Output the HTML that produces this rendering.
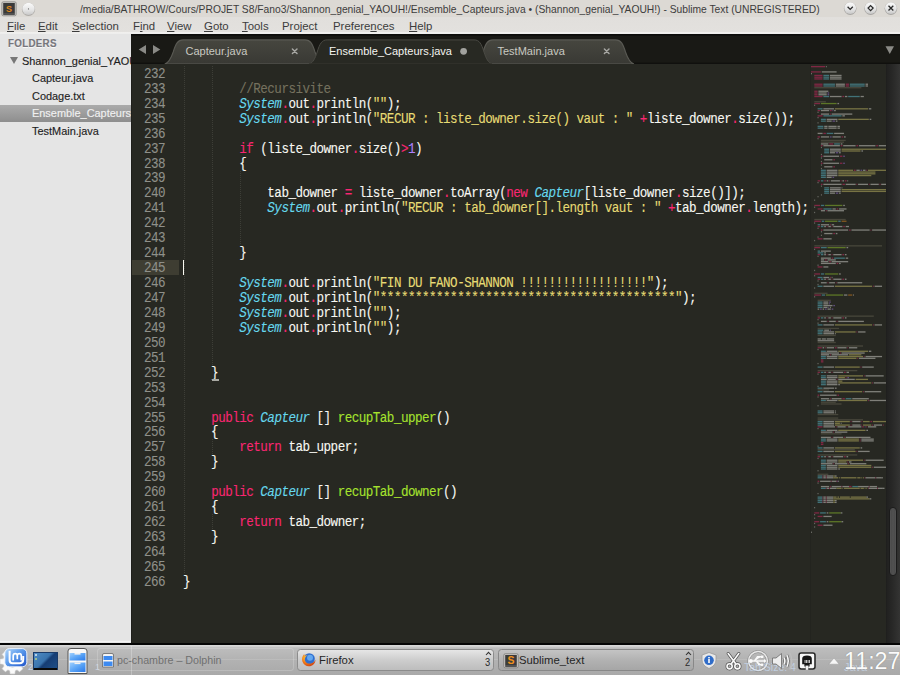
<!DOCTYPE html>
<html><head><meta charset="utf-8">
<style>
*{margin:0;padding:0;box-sizing:border-box}
html,body{width:900px;height:675px;overflow:hidden;background:#272822;position:relative;font-family:"Liberation Sans",sans-serif}
.abs{position:absolute}
#title{left:0;top:0;width:900px;height:17px;background:#dcd9d4}
#title .tt{position:absolute;left:80px;top:2.8px;font-size:11.3px;color:#3c3c3c;white-space:nowrap;transform:scaleX(0.91);transform-origin:0 0}
#menu{left:0;top:17px;width:900px;height:17px;background:linear-gradient(#e1dfdc 0,#e3e1de 15.3px,#f7f7f5 15.6px,#f7f7f5 16.4px,#e5e5e5 16.6px)}
#menu span{position:absolute;top:3px;font-size:11.4px;color:#3c3c3c;white-space:nowrap}
#menu u{text-decoration:underline;text-underline-offset:1px}
#side{left:0;top:34px;width:131px;height:609px;background:#e5e5e5;overflow:hidden}
#side .it{position:absolute;font-size:11.5px;color:#1e1e1e;white-space:nowrap;-webkit-text-stroke-width:0.15px;transform:scaleX(0.95);transform-origin:0 0}
#tabbar{left:131px;top:34px;width:769px;height:30px;background:#191915}
#editor{left:131px;top:64px;width:769px;height:577px;background:#272822}
.ln{position:absolute;left:183px;height:15px;line-height:15px;font-family:"Liberation Mono",monospace;font-size:12.6px;letter-spacing:-0.53px;color:#f8f8f2;white-space:pre;-webkit-text-stroke-width:0.1px;transform:scaleY(1.1);transform-origin:0 60%}
.gn{position:absolute;left:131px;width:34px;text-align:right;height:15px;line-height:15px;font-family:"Liberation Mono",monospace;font-size:12.6px;letter-spacing:-0.53px;color:#8f908a;-webkit-text-stroke-width:0.1px;transform:scaleY(1.1);transform-origin:0 60%}
.k{color:#f92672}.s{color:#e6db74}.t{color:#66d9ef;font-style:italic}.f{color:#a6e22e}.n{color:#ae81ff}.c{color:#75715e}
.tabt{position:absolute;top:44.5px;font-size:11px;white-space:nowrap}
.guide{position:absolute;width:1px;background:repeating-linear-gradient(to bottom,#3d3e37 0 1px,transparent 1px 2px)}
#panel{left:0;top:645px;width:900px;height:30px;background:linear-gradient(#c9c9c9,#a9a9a9)}
</style></head><body>
<div id="title" class="abs">
  <svg class="abs" style="left:1px;top:1px" width="16" height="16" viewBox="0 0 16 16">
   <rect x="0.8" y="0.8" width="14.4" height="14" rx="1.5" fill="#c7c5c2" stroke="#8c8a87" stroke-width="0.8"/>
   <rect x="2.2" y="2" width="11.6" height="10.5" fill="#3b3b3b"/>
   <rect x="2.2" y="12.5" width="11.6" height="1.2" fill="#202020"/>
   <text x="8" y="10.6" text-anchor="middle" font-family="Liberation Sans" font-weight="bold" font-size="9" fill="#e08a1c">S</text>
  </svg>
  <svg class="abs" style="left:21px;top:1px" width="16" height="16" viewBox="0 0 16 16">
   <circle cx="7.5" cy="8.4" r="6.6" fill="#aeaba8"/><circle cx="7.5" cy="7.9" r="6.2" fill="url(#wb)"/>
   <circle cx="7.5" cy="7.9" r="0.6" fill="#666"/>
  </svg>
  <div class="tt">/media/BATHROW/Cours/PROJET S8/Fano3/Shannon_genial_YAOUH!/Ensemble_Capteurs.java • (Shannon_genial_YAOUH!) - Sublime Text (UNREGISTERED)</div>
  <svg class="abs" style="left:838px;top:0" width="62" height="17" viewBox="0 0 62 17">
   <defs><linearGradient id="wb" x1="0" y1="0" x2="0" y2="1"><stop offset="0" stop-color="#fbfbfb"/><stop offset="0.6" stop-color="#e4e4e4"/><stop offset="1" stop-color="#c8c8c8"/></linearGradient></defs>
   <g><circle cx="12.2" cy="8.6" r="6.3" fill="#a9a7a4"/><circle cx="12.2" cy="8.1" r="5.9" fill="url(#wb)"/>
   <circle cx="32.6" cy="8.6" r="6.3" fill="#a9a7a4"/><circle cx="32.6" cy="8.1" r="5.9" fill="url(#wb)"/>
   <circle cx="52.9" cy="8.6" r="6.3" fill="#a9a7a4"/><circle cx="52.9" cy="8.1" r="5.9" fill="url(#wb)"/></g>
   <g fill="none" stroke="#2a2a2a" stroke-width="1.3">
   <path d="M9.6,6.8 L12.2,9.4 L14.8,6.8"/>
   <path d="M32.6,5.6 L35.1,8.1 L32.6,10.6 L30.1,8.1 Z"/>
   <path d="M50.5,5.7 L55.3,10.5 M55.3,5.7 L50.5,10.5"/>
   </g>
  </svg>
</div>
<div id="menu" class="abs">
  <span style="left:7px"><u>F</u>ile</span>
  <span style="left:38px"><u>E</u>dit</span>
  <span style="left:72px"><u>S</u>election</span>
  <span style="left:133px">F<u>i</u>nd</span>
  <span style="left:167px"><u>V</u>iew</span>
  <span style="left:204px"><u>G</u>oto</span>
  <span style="left:242px"><u>T</u>ools</span>
  <span style="left:282px">Project</span>
  <span style="left:333px">Prefere<u>n</u>ces</span>
  <span style="left:409px"><u>H</u>elp</span>
</div>
<div id="side" class="abs">
  <div class="it" style="left:7.5px;top:4px;font-weight:bold;color:#77767c;font-size:10.3px;letter-spacing:0.3px;text-shadow:0 1px 0 #f8f8f8">FOLDERS</div>
  <div class="abs" style="left:10px;top:23px;width:0;height:0;border-left:4px solid transparent;border-right:4px solid transparent;border-top:7px solid #777"></div>
  <div class="it" style="left:22px;top:20.5px">Shannon_genial_YAOUH!</div>
  <div class="it" style="left:32px;top:38px">Capteur.java</div>
  <div class="it" style="left:32px;top:55.5px">Codage.txt</div>
  <div class="abs" style="left:0;top:71px;width:131px;height:17px;background:linear-gradient(#ababab,#8e8e8e)"></div>
  <div class="it" style="left:32px;top:73px;color:#f0f0f0">Ensemble_Capteurs.java</div>
  <div class="it" style="left:32px;top:90.5px">TestMain.java</div>
</div>
<div id="tabbar" class="abs"></div>
<svg class="abs" style="left:131px;top:34px" width="769" height="31" viewBox="0 0 769 31">
<defs><linearGradient id="gi" x1="0" y1="0" x2="0" y2="1"><stop offset="0" stop-color="#46463f"/><stop offset="1" stop-color="#393934"/></linearGradient></defs>
<rect x="0" y="0" width="769" height="1.6" fill="#0c0c0a"/>
<rect x="0" y="28.6" width="769" height="1.2" fill="#0f0f0d"/>
<path d="M33.7,30 C38.2,29 40.2,24 42.2,18 C44.7,9.9 46.7,5.9 52.2,5.9 L174.0,5.9 C179.5,5.9 181.5,9.9 184.0,18 C186.0,24 188.0,29 192.5,30 Z" fill="url(#gi)" stroke="#5a5a54" stroke-width="1.1"/>
<path d="M343.5,30 C348.0,29 350.0,24 352.0,18 C354.5,9.9 356.5,5.9 362.0,5.9 L484.5,5.9 C490,5.9 492,9.9 494.5,18 C496.5,24 498.5,29 503,30 Z" fill="url(#gi)" stroke="#5a5a54" stroke-width="1.1"/>
<rect x="0" y="30" width="769" height="1" fill="#2b2c26"/>
<path d="M177.7,30 C182.2,29 184.2,24 186.2,18 C188.7,9.9 190.7,5.9 196.2,5.9 L343.0,5.9 C348.5,5.9 350.5,9.9 353.0,18 C355.0,24 357.0,29 361.5,30 Z" fill="#282923" stroke="#4a4a44" stroke-width="1"/>
<rect x="178" y="29.5" width="183" height="2" fill="#282923"/>
<path d="M7.7,15.5 L15,11 L15,20 Z" fill="#8a8a86"/>
<path d="M22,11 L29.3,15.5 L22,20 Z" fill="#8a8a86"/>
<path d="M754.5,12.2 L763,12.2 L758.75,20 Z" fill="#8a8a86"/>
<g stroke="#a8a8a4" stroke-width="1.45" stroke-linecap="round">
<path d="M161.4,15.0 L166.0,19.6 M166.0,15.0 L161.4,19.6"/>
<path d="M473.4,15.0 L478.0,19.6 M478.0,15.0 L473.4,19.6"/>
</g>
<circle cx="332.6" cy="17.3" r="3.4" fill="#a2a29e"/>
</svg>
<div class="tabt" style="left:185.5px;color:#c9c9c1">Capteur.java</div>
<div class="tabt" style="left:329px;color:#f4f4f0">Ensemble_Capteurs.java</div>
<div class="tabt" style="left:497.5px;color:#c9c9c1">TestMain.java</div>

<div id="editor" class="abs"></div>
<div class="abs" style="left:131px;top:64px;width:1px;height:579px;background:#1f1f1b"></div>
<div class="abs" style="left:132px;top:260px;width:47px;height:15px;background:#3e3d32"></div>
<div class="guide" style="left:184.0px;top:65.9px;height:508.0px"></div>
<div class="guide" style="left:212.1px;top:65.9px;height:298.8px"></div>
<div class="guide" style="left:240.2px;top:170.5px;height:74.7px"></div>
<div class="guide" style="left:212.1px;top:439.4px;height:14.9px"></div>
<div class="guide" style="left:212.1px;top:514.1px;height:14.9px"></div>
<div class="gn" style="top:67.90px">232</div>
<div class="gn" style="top:82.84px">233</div>
<div class="gn" style="top:97.78px">234</div>
<div class="gn" style="top:112.72px">235</div>
<div class="gn" style="top:127.66px">236</div>
<div class="gn" style="top:142.60px">237</div>
<div class="gn" style="top:157.54px">238</div>
<div class="gn" style="top:172.48px">239</div>
<div class="gn" style="top:187.42px">240</div>
<div class="gn" style="top:202.36px">241</div>
<div class="gn" style="top:217.30px">242</div>
<div class="gn" style="top:232.24px">243</div>
<div class="gn" style="top:247.18px">244</div>
<div class="gn" style="top:262.12px">245</div>
<div class="gn" style="top:277.06px">246</div>
<div class="gn" style="top:292.00px">247</div>
<div class="gn" style="top:306.94px">248</div>
<div class="gn" style="top:321.88px">249</div>
<div class="gn" style="top:336.82px">250</div>
<div class="gn" style="top:351.76px">251</div>
<div class="gn" style="top:366.70px">252</div>
<div class="gn" style="top:381.64px">253</div>
<div class="gn" style="top:396.58px">254</div>
<div class="gn" style="top:411.52px">255</div>
<div class="gn" style="top:426.46px">256</div>
<div class="gn" style="top:441.40px">257</div>
<div class="gn" style="top:456.34px">258</div>
<div class="gn" style="top:471.28px">259</div>
<div class="gn" style="top:486.22px">260</div>
<div class="gn" style="top:501.16px">261</div>
<div class="gn" style="top:516.10px">262</div>
<div class="gn" style="top:531.04px">263</div>
<div class="gn" style="top:545.98px">264</div>
<div class="gn" style="top:560.92px">265</div>
<div class="gn" style="top:575.86px">266</div>
<div class="ln" style="top:67.90px"></div>
<div class="ln" style="top:82.84px">        <span class="c">//Recursivite</span></div>
<div class="ln" style="top:97.78px">        <span class="t">System</span><span class="k">.</span>out<span class="k">.</span>println(<span class="s">&quot;&quot;</span>);</div>
<div class="ln" style="top:112.72px">        <span class="t">System</span><span class="k">.</span>out<span class="k">.</span>println(<span class="s">&quot;RECUR : liste_downer.size() vaut : &quot;</span> <span class="k">+</span>liste_downer<span class="k">.</span>size());</div>
<div class="ln" style="top:127.66px"></div>
<div class="ln" style="top:142.60px">        <span class="k">if</span> (liste_downer<span class="k">.</span>size()<span class="k">&gt;</span><span class="n">1</span>)</div>
<div class="ln" style="top:157.54px">        {</div>
<div class="ln" style="top:172.48px"></div>
<div class="ln" style="top:187.42px">            tab_downer <span class="k">=</span> liste_downer<span class="k">.</span>toArray(<span class="k">new</span> <span class="t">Capteur</span>[liste_downer<span class="k">.</span>size()]);</div>
<div class="ln" style="top:202.36px">            <span class="t">System</span><span class="k">.</span>out<span class="k">.</span>println(<span class="s">&quot;RECUR : tab_downer[].length vaut : &quot;</span> <span class="k">+</span>tab_downer<span class="k">.</span>length);</div>
<div class="ln" style="top:217.30px"></div>
<div class="ln" style="top:232.24px"></div>
<div class="ln" style="top:247.18px">        }</div>
<div class="ln" style="top:262.12px"></div>
<div class="ln" style="top:277.06px">        <span class="t">System</span><span class="k">.</span>out<span class="k">.</span>println(<span class="s">&quot;FIN DU FANO-SHANNON !!!!!!!!!!!!!!!!!!&quot;</span>);</div>
<div class="ln" style="top:292.00px">        <span class="t">System</span><span class="k">.</span>out<span class="k">.</span>println(<span class="s">&quot;******************************************&quot;</span>);</div>
<div class="ln" style="top:306.94px">        <span class="t">System</span><span class="k">.</span>out<span class="k">.</span>println(<span class="s">&quot;&quot;</span>);</div>
<div class="ln" style="top:321.88px">        <span class="t">System</span><span class="k">.</span>out<span class="k">.</span>println(<span class="s">&quot;&quot;</span>);</div>
<div class="ln" style="top:336.82px"></div>
<div class="ln" style="top:351.76px"></div>
<div class="ln" style="top:366.70px">    }</div>
<div class="ln" style="top:381.64px"></div>
<div class="ln" style="top:396.58px"></div>
<div class="ln" style="top:411.52px">    <span class="k">public</span> <span class="t">Capteur</span> [] <span class="f">recupTab_upper</span>()</div>
<div class="ln" style="top:426.46px">    {</div>
<div class="ln" style="top:441.40px">        <span class="k">return</span> tab_upper;</div>
<div class="ln" style="top:456.34px">    }</div>
<div class="ln" style="top:471.28px"></div>
<div class="ln" style="top:486.22px">    <span class="k">public</span> <span class="t">Capteur</span> [] <span class="f">recupTab_downer</span>()</div>
<div class="ln" style="top:501.16px">    {</div>
<div class="ln" style="top:516.10px">        <span class="k">return</span> tab_downer;</div>
<div class="ln" style="top:531.04px">    }</div>
<div class="ln" style="top:545.98px"></div>
<div class="ln" style="top:560.92px"></div>
<div class="ln" style="top:575.86px">}</div>
<div class="abs" style="left:183px;top:260px;width:1px;height:15px;background:#f8f8f0"></div>
<div class="abs" style="left:212px;top:379.4px;width:7px;height:1.4px;background:#a9a9a3"></div>
<svg class="abs" style="left:811px;top:64px" width="75" height="480" viewBox="0 0 75 480" opacity="0.42"><rect x="0.00" y="2.00" width="14.04" height="1.3" fill="#f92672"/><rect x="14.87" y="2.00" width="0.83" height="1.3" fill="#f8f8f2"/><rect x="0.00" y="7.27" width="9.91" height="1.3" fill="#f92672"/><rect x="10.74" y="7.27" width="14.87" height="1.3" fill="#f8f8f2"/><rect x="0.00" y="9.03" width="0.83" height="1.3" fill="#f8f8f2"/><rect x="3.30" y="10.78" width="8.26" height="1.3" fill="#f92672"/><rect x="12.39" y="10.78" width="5.78" height="1.3" fill="#66d9ef"/><rect x="19.00" y="10.78" width="11.56" height="1.3" fill="#f8f8f2"/><rect x="3.30" y="12.54" width="8.26" height="1.3" fill="#f92672"/><rect x="12.39" y="12.54" width="5.78" height="1.3" fill="#66d9ef"/><rect x="19.00" y="12.54" width="11.56" height="1.3" fill="#f8f8f2"/><rect x="3.30" y="14.30" width="8.26" height="1.3" fill="#f92672"/><rect x="12.39" y="14.30" width="5.78" height="1.3" fill="#66d9ef"/><rect x="19.00" y="14.30" width="11.56" height="1.3" fill="#f8f8f2"/><rect x="3.30" y="19.57" width="8.26" height="1.3" fill="#f92672"/><rect x="12.39" y="19.57" width="11.56" height="1.3" fill="#66d9ef"/><rect x="24.78" y="19.57" width="9.09" height="1.3" fill="#f8f8f2"/><rect x="34.69" y="19.57" width="3.30" height="1.3" fill="#f92672"/><rect x="38.82" y="19.57" width="14.87" height="1.3" fill="#66d9ef"/><rect x="54.52" y="19.57" width="2.48" height="1.3" fill="#f8f8f2"/><rect x="3.30" y="21.33" width="8.26" height="1.3" fill="#f92672"/><rect x="12.39" y="21.33" width="11.56" height="1.3" fill="#66d9ef"/><rect x="24.78" y="21.33" width="9.09" height="1.3" fill="#f8f8f2"/><rect x="34.69" y="21.33" width="3.30" height="1.3" fill="#f92672"/><rect x="38.82" y="21.33" width="14.87" height="1.3" fill="#66d9ef"/><rect x="54.52" y="21.33" width="2.48" height="1.3" fill="#f8f8f2"/><rect x="3.30" y="23.08" width="47.08" height="1.3" fill="#75715e"/><rect x="3.30" y="26.60" width="3.30" height="1.3" fill="#f92672"/><rect x="7.43" y="26.60" width="9.91" height="1.3" fill="#f8f8f2"/><rect x="3.30" y="28.35" width="3.30" height="1.3" fill="#f92672"/><rect x="7.43" y="28.35" width="8.26" height="1.3" fill="#f8f8f2"/><rect x="16.52" y="28.35" width="1.65" height="1.3" fill="#ae81ff"/><rect x="3.30" y="30.11" width="3.30" height="1.3" fill="#f92672"/><rect x="7.43" y="30.11" width="8.26" height="1.3" fill="#f8f8f2"/><rect x="16.52" y="30.11" width="1.65" height="1.3" fill="#ae81ff"/><rect x="3.30" y="31.87" width="8.26" height="1.3" fill="#f92672"/><rect x="12.39" y="31.87" width="5.78" height="1.3" fill="#66d9ef"/><rect x="19.00" y="31.87" width="11.56" height="1.3" fill="#f8f8f2"/><rect x="31.39" y="31.87" width="1.65" height="1.3" fill="#f92672"/><rect x="33.87" y="31.87" width="2.48" height="1.3" fill="#f8f8f2"/><rect x="37.17" y="31.87" width="11.56" height="1.3" fill="#66d9ef"/><rect x="49.56" y="31.87" width="3.30" height="1.3" fill="#f8f8f2"/><rect x="3.30" y="37.14" width="11.56" height="1.3" fill="#75715e"/><rect x="3.30" y="38.90" width="5.78" height="1.3" fill="#f92672"/><rect x="9.91" y="38.90" width="15.69" height="1.3" fill="#a6e22e"/><rect x="26.43" y="38.90" width="1.65" height="1.3" fill="#f8f8f2"/><rect x="3.30" y="40.65" width="0.83" height="1.3" fill="#f8f8f2"/><rect x="6.61" y="44.17" width="4.96" height="1.3" fill="#66d9ef"/><rect x="12.39" y="44.17" width="10.74" height="1.3" fill="#f8f8f2"/><rect x="23.95" y="44.17" width="33.04" height="1.3" fill="#e6db74"/><rect x="57.82" y="44.17" width="2.48" height="1.3" fill="#f8f8f2"/><rect x="6.61" y="45.92" width="2.48" height="1.3" fill="#f92672"/><rect x="9.91" y="45.92" width="8.26" height="1.3" fill="#f8f8f2"/><rect x="19.00" y="45.92" width="1.65" height="1.3" fill="#f92672"/><rect x="21.48" y="45.92" width="0.83" height="1.3" fill="#ae81ff"/><rect x="23.13" y="45.92" width="1.65" height="1.3" fill="#f8f8f2"/><rect x="6.61" y="47.68" width="0.83" height="1.3" fill="#f8f8f2"/><rect x="9.91" y="49.44" width="8.26" height="1.3" fill="#f8f8f2"/><rect x="19.00" y="49.44" width="0.83" height="1.3" fill="#f92672"/><rect x="20.65" y="49.44" width="20.65" height="1.3" fill="#f8f8f2"/><rect x="6.61" y="51.20" width="4.96" height="1.3" fill="#f92672"/><rect x="12.39" y="51.20" width="18.17" height="1.3" fill="#66d9ef"/><rect x="31.39" y="51.20" width="2.48" height="1.3" fill="#f8f8f2"/><rect x="6.61" y="52.95" width="0.83" height="1.3" fill="#f8f8f2"/><rect x="9.91" y="54.71" width="4.96" height="1.3" fill="#66d9ef"/><rect x="15.69" y="54.71" width="10.74" height="1.3" fill="#f8f8f2"/><rect x="27.26" y="54.71" width="30.56" height="1.3" fill="#e6db74"/><rect x="58.65" y="54.71" width="1.65" height="1.3" fill="#f8f8f2"/><rect x="9.91" y="56.47" width="4.96" height="1.3" fill="#66d9ef"/><rect x="15.69" y="56.47" width="4.96" height="1.3" fill="#f8f8f2"/><rect x="21.48" y="56.47" width="2.48" height="1.3" fill="#ae81ff"/><rect x="24.78" y="56.47" width="1.65" height="1.3" fill="#f8f8f2"/><rect x="6.61" y="58.22" width="0.83" height="1.3" fill="#f8f8f2"/><rect x="6.61" y="61.74" width="5.78" height="1.3" fill="#66d9ef"/><rect x="13.22" y="61.74" width="3.30" height="1.3" fill="#f8f8f2"/><rect x="17.35" y="61.74" width="8.26" height="1.3" fill="#f8f8f2"/><rect x="26.43" y="61.74" width="2.48" height="1.3" fill="#f8f8f2"/><rect x="6.61" y="63.50" width="5.78" height="1.3" fill="#66d9ef"/><rect x="13.22" y="63.50" width="3.30" height="1.3" fill="#f8f8f2"/><rect x="17.35" y="63.50" width="8.26" height="1.3" fill="#f8f8f2"/><rect x="26.43" y="63.50" width="2.48" height="1.3" fill="#f8f8f2"/><rect x="6.61" y="68.77" width="4.96" height="1.3" fill="#f8f8f2"/><rect x="12.39" y="68.77" width="2.48" height="1.3" fill="#f92672"/><rect x="15.69" y="68.77" width="6.61" height="1.3" fill="#66d9ef"/><rect x="23.13" y="68.77" width="9.91" height="1.3" fill="#f8f8f2"/><rect x="6.61" y="72.28" width="2.48" height="1.3" fill="#f92672"/><rect x="9.91" y="72.28" width="8.26" height="1.3" fill="#f8f8f2"/><rect x="19.00" y="72.28" width="1.65" height="1.3" fill="#ae81ff"/><rect x="21.48" y="72.28" width="8.26" height="1.3" fill="#f8f8f2"/><rect x="30.56" y="72.28" width="1.65" height="1.3" fill="#f92672"/><rect x="33.04" y="72.28" width="1.65" height="1.3" fill="#f8f8f2"/><rect x="6.61" y="74.04" width="0.83" height="1.3" fill="#f8f8f2"/><rect x="9.91" y="75.79" width="24.78" height="1.3" fill="#75715e"/><rect x="9.91" y="77.55" width="23.13" height="1.3" fill="#75715e"/><rect x="9.91" y="79.31" width="7.43" height="1.3" fill="#f8f8f2"/><rect x="18.17" y="79.31" width="4.13" height="1.3" fill="#f92672"/><rect x="23.13" y="79.31" width="5.78" height="1.3" fill="#66d9ef"/><rect x="29.74" y="79.31" width="1.65" height="1.3" fill="#f8f8f2"/><rect x="9.91" y="81.06" width="1.65" height="1.3" fill="#f92672"/><rect x="12.39" y="81.06" width="16.52" height="1.3" fill="#f8f8f2"/><rect x="29.74" y="81.06" width="1.65" height="1.3" fill="#f92672"/><rect x="32.21" y="81.06" width="12.39" height="1.3" fill="#f8f8f2"/><rect x="45.43" y="81.06" width="1.65" height="1.3" fill="#f92672"/><rect x="47.91" y="81.06" width="16.52" height="1.3" fill="#f8f8f2"/><rect x="65.25" y="81.06" width="1.65" height="1.3" fill="#f92672"/><rect x="67.73" y="81.06" width="7.27" height="1.3" fill="#f8f8f2"/><rect x="9.91" y="82.82" width="0.83" height="1.3" fill="#f8f8f2"/><rect x="13.22" y="84.58" width="4.96" height="1.3" fill="#66d9ef"/><rect x="19.00" y="84.58" width="10.74" height="1.3" fill="#f8f8f2"/><rect x="30.56" y="84.58" width="44.44" height="1.3" fill="#e6db74"/><rect x="13.22" y="86.34" width="4.96" height="1.3" fill="#66d9ef"/><rect x="19.00" y="86.34" width="10.74" height="1.3" fill="#f8f8f2"/><rect x="30.56" y="86.34" width="19.00" height="1.3" fill="#e6db74"/><rect x="50.39" y="86.34" width="1.65" height="1.3" fill="#f8f8f2"/><rect x="13.22" y="88.09" width="4.96" height="1.3" fill="#66d9ef"/><rect x="19.00" y="88.09" width="4.96" height="1.3" fill="#f8f8f2"/><rect x="24.78" y="88.09" width="2.48" height="1.3" fill="#ae81ff"/><rect x="28.08" y="88.09" width="1.65" height="1.3" fill="#f8f8f2"/><rect x="9.91" y="89.85" width="0.83" height="1.3" fill="#f8f8f2"/><rect x="9.91" y="91.61" width="1.65" height="1.3" fill="#f92672"/><rect x="12.39" y="91.61" width="15.69" height="1.3" fill="#f8f8f2"/><rect x="28.91" y="91.61" width="2.48" height="1.3" fill="#f92672"/><rect x="32.21" y="91.61" width="1.65" height="1.3" fill="#ae81ff"/><rect x="9.91" y="93.36" width="0.83" height="1.3" fill="#f8f8f2"/><rect x="13.22" y="95.12" width="8.26" height="1.3" fill="#f8f8f2"/><rect x="22.30" y="95.12" width="1.65" height="1.3" fill="#f92672"/><rect x="9.91" y="96.88" width="0.83" height="1.3" fill="#f8f8f2"/><rect x="9.91" y="98.63" width="1.65" height="1.3" fill="#f92672"/><rect x="12.39" y="98.63" width="15.69" height="1.3" fill="#f8f8f2"/><rect x="28.91" y="98.63" width="2.48" height="1.3" fill="#f92672"/><rect x="32.21" y="98.63" width="1.65" height="1.3" fill="#ae81ff"/><rect x="9.91" y="100.39" width="0.83" height="1.3" fill="#f8f8f2"/><rect x="13.22" y="102.15" width="8.26" height="1.3" fill="#f8f8f2"/><rect x="22.30" y="102.15" width="1.65" height="1.3" fill="#f92672"/><rect x="9.91" y="103.91" width="0.83" height="1.3" fill="#f8f8f2"/><rect x="9.91" y="105.66" width="4.96" height="1.3" fill="#66d9ef"/><rect x="15.69" y="105.66" width="10.74" height="1.3" fill="#f8f8f2"/><rect x="27.26" y="105.66" width="14.87" height="1.3" fill="#e6db74"/><rect x="42.95" y="105.66" width="1.65" height="1.3" fill="#f92672"/><rect x="45.43" y="105.66" width="3.30" height="1.3" fill="#f8f8f2"/><rect x="49.56" y="105.66" width="1.65" height="1.3" fill="#ae81ff"/><rect x="52.04" y="105.66" width="2.48" height="1.3" fill="#f8f8f2"/><rect x="55.34" y="105.66" width="0.83" height="1.3" fill="#f92672"/><rect x="56.99" y="105.66" width="18.01" height="1.3" fill="#e6db74"/><rect x="9.91" y="107.42" width="4.96" height="1.3" fill="#66d9ef"/><rect x="15.69" y="107.42" width="10.74" height="1.3" fill="#f8f8f2"/><rect x="27.26" y="107.42" width="37.17" height="1.3" fill="#e6db74"/><rect x="9.91" y="109.18" width="4.96" height="1.3" fill="#66d9ef"/><rect x="15.69" y="109.18" width="10.74" height="1.3" fill="#f8f8f2"/><rect x="27.26" y="109.18" width="37.17" height="1.3" fill="#e6db74"/><rect x="9.91" y="110.93" width="4.96" height="1.3" fill="#66d9ef"/><rect x="15.69" y="110.93" width="10.74" height="1.3" fill="#f8f8f2"/><rect x="27.26" y="110.93" width="33.04" height="1.3" fill="#e6db74"/><rect x="9.91" y="112.69" width="4.96" height="1.3" fill="#66d9ef"/><rect x="15.69" y="112.69" width="4.96" height="1.3" fill="#f8f8f2"/><rect x="21.48" y="112.69" width="1.65" height="1.3" fill="#ae81ff"/><rect x="6.61" y="116.20" width="2.48" height="1.3" fill="#f92672"/><rect x="9.91" y="116.20" width="2.48" height="1.3" fill="#66d9ef"/><rect x="13.22" y="116.20" width="1.65" height="1.3" fill="#f92672"/><rect x="15.69" y="116.20" width="1.65" height="1.3" fill="#f8f8f2"/><rect x="18.17" y="116.20" width="0.83" height="1.3" fill="#f92672"/><rect x="19.82" y="116.20" width="9.09" height="1.3" fill="#f8f8f2"/><rect x="29.74" y="116.20" width="0.83" height="1.3" fill="#f92672"/><rect x="31.39" y="116.20" width="1.65" height="1.3" fill="#f8f8f2"/><rect x="33.87" y="116.20" width="1.65" height="1.3" fill="#f92672"/><rect x="36.34" y="116.20" width="0.83" height="1.3" fill="#f8f8f2"/><rect x="6.61" y="117.96" width="0.83" height="1.3" fill="#f8f8f2"/><rect x="9.91" y="119.72" width="1.65" height="1.3" fill="#f92672"/><rect x="12.39" y="119.72" width="18.17" height="1.3" fill="#f8f8f2"/><rect x="31.39" y="119.72" width="2.48" height="1.3" fill="#f92672"/><rect x="34.69" y="119.72" width="9.91" height="1.3" fill="#f8f8f2"/><rect x="45.43" y="119.72" width="0.83" height="1.3" fill="#f92672"/><rect x="47.08" y="119.72" width="9.91" height="1.3" fill="#f8f8f2"/><rect x="57.82" y="119.72" width="0.83" height="1.3" fill="#f92672"/><rect x="59.47" y="119.72" width="8.26" height="1.3" fill="#f8f8f2"/><rect x="68.56" y="119.72" width="0.83" height="1.3" fill="#f92672"/><rect x="70.21" y="119.72" width="4.79" height="1.3" fill="#f8f8f2"/><rect x="9.91" y="121.48" width="0.83" height="1.3" fill="#f8f8f2"/><rect x="13.22" y="123.23" width="4.96" height="1.3" fill="#66d9ef"/><rect x="19.00" y="123.23" width="10.74" height="1.3" fill="#f8f8f2"/><rect x="30.56" y="123.23" width="0.83" height="1.3" fill="#f8f8f2"/><rect x="13.22" y="124.99" width="4.96" height="1.3" fill="#66d9ef"/><rect x="19.00" y="124.99" width="10.74" height="1.3" fill="#f8f8f2"/><rect x="30.56" y="124.99" width="44.44" height="1.3" fill="#e6db74"/><rect x="13.22" y="126.75" width="4.96" height="1.3" fill="#66d9ef"/><rect x="19.00" y="126.75" width="10.74" height="1.3" fill="#f8f8f2"/><rect x="30.56" y="126.75" width="44.44" height="1.3" fill="#e6db74"/><rect x="13.22" y="128.50" width="4.96" height="1.3" fill="#66d9ef"/><rect x="19.00" y="128.50" width="4.96" height="1.3" fill="#f8f8f2"/><rect x="24.78" y="128.50" width="2.48" height="1.3" fill="#ae81ff"/><rect x="28.08" y="128.50" width="1.65" height="1.3" fill="#f8f8f2"/><rect x="9.91" y="130.26" width="0.83" height="1.3" fill="#f8f8f2"/><rect x="6.61" y="132.02" width="0.83" height="1.3" fill="#f8f8f2"/><rect x="3.30" y="135.53" width="0.83" height="1.3" fill="#f8f8f2"/><rect x="3.30" y="140.80" width="5.78" height="1.3" fill="#f92672"/><rect x="9.91" y="140.80" width="3.30" height="1.3" fill="#66d9ef"/><rect x="14.04" y="140.80" width="17.35" height="1.3" fill="#a6e22e"/><rect x="32.21" y="140.80" width="1.65" height="1.3" fill="#f8f8f2"/><rect x="3.30" y="142.56" width="0.83" height="1.3" fill="#f8f8f2"/><rect x="6.61" y="144.32" width="4.96" height="1.3" fill="#f92672"/><rect x="12.39" y="144.32" width="8.26" height="1.3" fill="#66d9ef"/><rect x="21.48" y="144.32" width="3.30" height="1.3" fill="#f8f8f2"/><rect x="25.61" y="144.32" width="1.65" height="1.3" fill="#f92672"/><rect x="28.08" y="144.32" width="7.43" height="1.3" fill="#f8f8f2"/><rect x="9.91" y="146.07" width="4.13" height="1.3" fill="#f8f8f2"/><rect x="14.87" y="146.07" width="0.83" height="1.3" fill="#f92672"/><rect x="16.52" y="146.07" width="16.52" height="1.3" fill="#f8f8f2"/><rect x="3.30" y="147.83" width="0.83" height="1.3" fill="#f8f8f2"/><rect x="3.30" y="154.86" width="31.39" height="1.3" fill="#75715e"/><rect x="3.30" y="156.62" width="6.61" height="1.3" fill="#f92672"/><rect x="10.74" y="156.62" width="2.48" height="1.3" fill="#66d9ef"/><rect x="14.04" y="156.62" width="12.39" height="1.3" fill="#a6e22e"/><rect x="27.26" y="156.62" width="2.48" height="1.3" fill="#66d9ef"/><rect x="30.56" y="156.62" width="4.96" height="1.3" fill="#fd971f"/><rect x="3.30" y="158.37" width="0.83" height="1.3" fill="#f8f8f2"/><rect x="6.61" y="160.13" width="2.48" height="1.3" fill="#66d9ef"/><rect x="9.91" y="160.13" width="8.26" height="1.3" fill="#f8f8f2"/><rect x="19.00" y="160.13" width="0.83" height="1.3" fill="#f92672"/><rect x="20.65" y="160.13" width="2.48" height="1.3" fill="#f8f8f2"/><rect x="6.61" y="161.89" width="2.48" height="1.3" fill="#f92672"/><rect x="9.91" y="161.89" width="2.48" height="1.3" fill="#66d9ef"/><rect x="13.22" y="161.89" width="1.65" height="1.3" fill="#f8f8f2"/><rect x="15.69" y="161.89" width="0.83" height="1.3" fill="#f92672"/><rect x="17.35" y="161.89" width="2.48" height="1.3" fill="#f8f8f2"/><rect x="20.65" y="161.89" width="0.83" height="1.3" fill="#f92672"/><rect x="22.30" y="161.89" width="9.09" height="1.3" fill="#f8f8f2"/><rect x="32.21" y="161.89" width="1.65" height="1.3" fill="#f92672"/><rect x="34.69" y="161.89" width="3.30" height="1.3" fill="#f8f8f2"/><rect x="6.61" y="163.64" width="0.83" height="1.3" fill="#f8f8f2"/><rect x="9.91" y="165.40" width="1.65" height="1.3" fill="#f92672"/><rect x="12.39" y="165.40" width="24.78" height="1.3" fill="#f8f8f2"/><rect x="38.00" y="165.40" width="1.65" height="1.3" fill="#f92672"/><rect x="40.47" y="165.40" width="18.17" height="1.3" fill="#f8f8f2"/><rect x="59.47" y="165.40" width="0.83" height="1.3" fill="#f92672"/><rect x="61.12" y="165.40" width="13.88" height="1.3" fill="#f8f8f2"/><rect x="9.91" y="167.16" width="0.83" height="1.3" fill="#f8f8f2"/><rect x="13.22" y="168.91" width="8.26" height="1.3" fill="#f8f8f2"/><rect x="22.30" y="168.91" width="1.65" height="1.3" fill="#f92672"/><rect x="24.78" y="168.91" width="1.65" height="1.3" fill="#f8f8f2"/><rect x="9.91" y="170.67" width="0.83" height="1.3" fill="#f8f8f2"/><rect x="6.61" y="172.43" width="0.83" height="1.3" fill="#f8f8f2"/><rect x="6.61" y="174.19" width="4.96" height="1.3" fill="#f92672"/><rect x="12.39" y="174.19" width="8.26" height="1.3" fill="#f8f8f2"/><rect x="3.30" y="175.94" width="0.83" height="1.3" fill="#f8f8f2"/><rect x="3.30" y="181.21" width="67.73" height="1.3" fill="#75715e"/><rect x="3.30" y="182.97" width="5.78" height="1.3" fill="#f92672"/><rect x="9.91" y="182.97" width="5.78" height="1.3" fill="#66d9ef"/><rect x="16.52" y="182.97" width="18.17" height="1.3" fill="#a6e22e"/><rect x="35.52" y="182.97" width="1.65" height="1.3" fill="#f8f8f2"/><rect x="3.30" y="184.73" width="0.83" height="1.3" fill="#f8f8f2"/><rect x="6.61" y="186.48" width="2.48" height="1.3" fill="#66d9ef"/><rect x="9.91" y="186.48" width="9.91" height="1.3" fill="#f8f8f2"/><rect x="6.61" y="188.24" width="5.78" height="1.3" fill="#66d9ef"/><rect x="13.22" y="188.24" width="1.65" height="1.3" fill="#f8f8f2"/><rect x="6.61" y="190.00" width="2.48" height="1.3" fill="#f92672"/><rect x="9.91" y="190.00" width="2.48" height="1.3" fill="#66d9ef"/><rect x="13.22" y="190.00" width="1.65" height="1.3" fill="#f8f8f2"/><rect x="15.69" y="190.00" width="0.83" height="1.3" fill="#f92672"/><rect x="17.35" y="190.00" width="2.48" height="1.3" fill="#f8f8f2"/><rect x="20.65" y="190.00" width="0.83" height="1.3" fill="#f92672"/><rect x="22.30" y="190.00" width="8.26" height="1.3" fill="#f8f8f2"/><rect x="31.39" y="190.00" width="1.65" height="1.3" fill="#f92672"/><rect x="33.87" y="190.00" width="1.65" height="1.3" fill="#f8f8f2"/><rect x="6.61" y="191.76" width="0.83" height="1.3" fill="#f8f8f2"/><rect x="9.91" y="193.51" width="9.91" height="1.3" fill="#f8f8f2"/><rect x="20.65" y="193.51" width="1.65" height="1.3" fill="#f92672"/><rect x="23.13" y="193.51" width="10.74" height="1.3" fill="#66d9ef"/><rect x="34.69" y="193.51" width="2.48" height="1.3" fill="#f8f8f2"/><rect x="9.91" y="195.27" width="3.30" height="1.3" fill="#f8f8f2"/><rect x="14.04" y="195.27" width="1.65" height="1.3" fill="#f92672"/><rect x="16.52" y="195.27" width="8.26" height="1.3" fill="#f8f8f2"/><rect x="9.91" y="197.03" width="7.43" height="1.3" fill="#f8f8f2"/><rect x="18.17" y="197.03" width="1.65" height="1.3" fill="#f92672"/><rect x="20.65" y="197.03" width="16.52" height="1.3" fill="#f8f8f2"/><rect x="9.91" y="198.78" width="14.87" height="1.3" fill="#f8f8f2"/><rect x="25.61" y="198.78" width="1.65" height="1.3" fill="#f92672"/><rect x="28.08" y="198.78" width="1.65" height="1.3" fill="#f8f8f2"/><rect x="6.61" y="200.54" width="0.83" height="1.3" fill="#f8f8f2"/><rect x="6.61" y="202.30" width="4.96" height="1.3" fill="#f92672"/><rect x="12.39" y="202.30" width="4.96" height="1.3" fill="#f8f8f2"/><rect x="3.30" y="205.81" width="0.83" height="1.3" fill="#f8f8f2"/><rect x="3.30" y="209.33" width="5.78" height="1.3" fill="#f92672"/><rect x="9.91" y="209.33" width="3.30" height="1.3" fill="#66d9ef"/><rect x="14.04" y="209.33" width="13.22" height="1.3" fill="#a6e22e"/><rect x="28.08" y="209.33" width="1.65" height="1.3" fill="#f8f8f2"/><rect x="3.30" y="211.08" width="0.83" height="1.3" fill="#f8f8f2"/><rect x="6.61" y="212.84" width="4.96" height="1.3" fill="#66d9ef"/><rect x="12.39" y="212.84" width="5.78" height="1.3" fill="#f8f8f2"/><rect x="19.00" y="212.84" width="0.83" height="1.3" fill="#f92672"/><rect x="20.65" y="212.84" width="0.83" height="1.3" fill="#f8f8f2"/><rect x="6.61" y="214.60" width="2.48" height="1.3" fill="#f92672"/><rect x="9.91" y="214.60" width="2.48" height="1.3" fill="#66d9ef"/><rect x="13.22" y="214.60" width="1.65" height="1.3" fill="#f8f8f2"/><rect x="15.69" y="214.60" width="0.83" height="1.3" fill="#f92672"/><rect x="17.35" y="214.60" width="2.48" height="1.3" fill="#f8f8f2"/><rect x="20.65" y="214.60" width="0.83" height="1.3" fill="#f92672"/><rect x="22.30" y="214.60" width="8.26" height="1.3" fill="#f8f8f2"/><rect x="31.39" y="214.60" width="1.65" height="1.3" fill="#f92672"/><rect x="33.87" y="214.60" width="1.65" height="1.3" fill="#f8f8f2"/><rect x="6.61" y="216.35" width="0.83" height="1.3" fill="#f8f8f2"/><rect x="9.91" y="218.11" width="5.78" height="1.3" fill="#f8f8f2"/><rect x="16.52" y="218.11" width="0.83" height="1.3" fill="#f92672"/><rect x="18.17" y="218.11" width="5.78" height="1.3" fill="#f8f8f2"/><rect x="24.78" y="218.11" width="0.83" height="1.3" fill="#f92672"/><rect x="26.43" y="218.11" width="24.78" height="1.3" fill="#f8f8f2"/><rect x="6.61" y="219.87" width="0.83" height="1.3" fill="#f8f8f2"/><rect x="6.61" y="221.62" width="4.96" height="1.3" fill="#66d9ef"/><rect x="12.39" y="221.62" width="10.74" height="1.3" fill="#f8f8f2"/><rect x="23.95" y="221.62" width="37.17" height="1.3" fill="#e6db74"/><rect x="61.95" y="221.62" width="0.83" height="1.3" fill="#f92672"/><rect x="63.60" y="221.62" width="7.43" height="1.3" fill="#f8f8f2"/><rect x="3.30" y="223.38" width="0.83" height="1.3" fill="#f8f8f2"/><rect x="3.30" y="228.65" width="13.22" height="1.3" fill="#75715e"/><rect x="3.30" y="230.41" width="6.61" height="1.3" fill="#f92672"/><rect x="10.74" y="230.41" width="3.30" height="1.3" fill="#66d9ef"/><rect x="14.87" y="230.41" width="17.35" height="1.3" fill="#a6e22e"/><rect x="33.04" y="230.41" width="3.30" height="1.3" fill="#f8f8f2"/><rect x="37.17" y="230.41" width="4.13" height="1.3" fill="#fd971f"/><rect x="42.13" y="230.41" width="0.83" height="1.3" fill="#f8f8f2"/><rect x="3.30" y="232.17" width="0.83" height="1.3" fill="#f8f8f2"/><rect x="6.61" y="235.68" width="13.22" height="1.3" fill="#75715e"/><rect x="6.61" y="237.44" width="4.96" height="1.3" fill="#66d9ef"/><rect x="12.39" y="237.44" width="4.96" height="1.3" fill="#f8f8f2"/><rect x="18.17" y="237.44" width="1.65" height="1.3" fill="#ae81ff"/><rect x="6.61" y="239.19" width="4.96" height="1.3" fill="#66d9ef"/><rect x="12.39" y="239.19" width="4.96" height="1.3" fill="#f8f8f2"/><rect x="18.17" y="239.19" width="0.83" height="1.3" fill="#ae81ff"/><rect x="6.61" y="240.95" width="4.96" height="1.3" fill="#66d9ef"/><rect x="12.39" y="240.95" width="9.09" height="1.3" fill="#f8f8f2"/><rect x="22.30" y="240.95" width="1.65" height="1.3" fill="#ae81ff"/><rect x="6.61" y="242.71" width="4.96" height="1.3" fill="#66d9ef"/><rect x="12.39" y="242.71" width="4.13" height="1.3" fill="#f8f8f2"/><rect x="17.35" y="242.71" width="0.83" height="1.3" fill="#ae81ff"/><rect x="19.00" y="242.71" width="0.83" height="1.3" fill="#f8f8f2"/><rect x="6.61" y="244.47" width="1.65" height="1.3" fill="#f8f8f2"/><rect x="9.09" y="244.47" width="1.65" height="1.3" fill="#ae81ff"/><rect x="11.56" y="244.47" width="1.65" height="1.3" fill="#f8f8f2"/><rect x="14.04" y="244.47" width="1.65" height="1.3" fill="#ae81ff"/><rect x="16.52" y="244.47" width="3.30" height="1.3" fill="#f8f8f2"/><rect x="20.65" y="244.47" width="1.65" height="1.3" fill="#ae81ff"/><rect x="6.61" y="251.49" width="56.17" height="1.3" fill="#75715e"/><rect x="6.61" y="253.25" width="2.48" height="1.3" fill="#f92672"/><rect x="9.91" y="253.25" width="2.48" height="1.3" fill="#66d9ef"/><rect x="13.22" y="253.25" width="1.65" height="1.3" fill="#f8f8f2"/><rect x="15.69" y="253.25" width="0.83" height="1.3" fill="#f92672"/><rect x="17.35" y="253.25" width="2.48" height="1.3" fill="#f8f8f2"/><rect x="20.65" y="253.25" width="0.83" height="1.3" fill="#f92672"/><rect x="22.30" y="253.25" width="8.26" height="1.3" fill="#f8f8f2"/><rect x="31.39" y="253.25" width="1.65" height="1.3" fill="#f92672"/><rect x="33.87" y="253.25" width="1.65" height="1.3" fill="#f8f8f2"/><rect x="6.61" y="255.01" width="0.83" height="1.3" fill="#f8f8f2"/><rect x="9.91" y="256.76" width="5.78" height="1.3" fill="#f8f8f2"/><rect x="16.52" y="256.76" width="0.83" height="1.3" fill="#f92672"/><rect x="18.17" y="256.76" width="6.61" height="1.3" fill="#f8f8f2"/><rect x="25.61" y="256.76" width="0.83" height="1.3" fill="#f92672"/><rect x="27.26" y="256.76" width="25.61" height="1.3" fill="#f8f8f2"/><rect x="6.61" y="258.52" width="0.83" height="1.3" fill="#f8f8f2"/><rect x="6.61" y="260.28" width="4.96" height="1.3" fill="#66d9ef"/><rect x="12.39" y="260.28" width="10.74" height="1.3" fill="#f8f8f2"/><rect x="23.95" y="260.28" width="37.17" height="1.3" fill="#e6db74"/><rect x="61.95" y="260.28" width="0.83" height="1.3" fill="#f92672"/><rect x="63.60" y="260.28" width="7.43" height="1.3" fill="#f8f8f2"/><rect x="6.61" y="263.79" width="21.48" height="1.3" fill="#75715e"/><rect x="6.61" y="265.55" width="5.78" height="1.3" fill="#66d9ef"/><rect x="13.22" y="265.55" width="4.96" height="1.3" fill="#f8f8f2"/><rect x="19.00" y="265.55" width="0.83" height="1.3" fill="#ae81ff"/><rect x="6.61" y="267.31" width="4.96" height="1.3" fill="#66d9ef"/><rect x="12.39" y="267.31" width="10.74" height="1.3" fill="#f8f8f2"/><rect x="23.95" y="267.31" width="20.65" height="1.3" fill="#e6db74"/><rect x="45.43" y="267.31" width="0.83" height="1.3" fill="#f92672"/><rect x="47.08" y="267.31" width="7.43" height="1.3" fill="#f8f8f2"/><rect x="6.61" y="269.06" width="4.96" height="1.3" fill="#66d9ef"/><rect x="12.39" y="269.06" width="10.74" height="1.3" fill="#f8f8f2"/><rect x="23.95" y="269.06" width="0.83" height="1.3" fill="#f8f8f2"/><rect x="6.61" y="270.82" width="18.17" height="1.3" fill="#75715e"/><rect x="6.61" y="274.33" width="3.30" height="1.3" fill="#f8f8f2"/><rect x="10.74" y="274.33" width="4.13" height="1.3" fill="#f8f8f2"/><rect x="15.69" y="274.33" width="7.43" height="1.3" fill="#f8f8f2"/><rect x="6.61" y="276.09" width="16.52" height="1.3" fill="#f8f8f2"/><rect x="6.61" y="277.85" width="18.17" height="1.3" fill="#75715e"/><rect x="6.61" y="281.36" width="45.43" height="1.3" fill="#75715e"/><rect x="6.61" y="283.12" width="4.13" height="1.3" fill="#f92672"/><rect x="11.56" y="283.12" width="1.65" height="1.3" fill="#f8f8f2"/><rect x="14.04" y="283.12" width="0.83" height="1.3" fill="#f92672"/><rect x="15.69" y="283.12" width="7.43" height="1.3" fill="#f8f8f2"/><rect x="23.95" y="283.12" width="1.65" height="1.3" fill="#f92672"/><rect x="26.43" y="283.12" width="9.09" height="1.3" fill="#f8f8f2"/><rect x="36.34" y="283.12" width="0.83" height="1.3" fill="#f92672"/><rect x="38.00" y="283.12" width="8.26" height="1.3" fill="#f8f8f2"/><rect x="6.61" y="284.88" width="0.83" height="1.3" fill="#f8f8f2"/><rect x="9.91" y="286.63" width="4.96" height="1.3" fill="#66d9ef"/><rect x="15.69" y="286.63" width="10.74" height="1.3" fill="#f8f8f2"/><rect x="27.26" y="286.63" width="29.74" height="1.3" fill="#e6db74"/><rect x="57.82" y="286.63" width="2.48" height="1.3" fill="#f8f8f2"/><rect x="9.91" y="288.39" width="18.17" height="1.3" fill="#f8f8f2"/><rect x="28.91" y="288.39" width="0.83" height="1.3" fill="#f92672"/><rect x="30.56" y="288.39" width="23.13" height="1.3" fill="#f8f8f2"/><rect x="9.91" y="290.15" width="8.26" height="1.3" fill="#f8f8f2"/><rect x="19.00" y="290.15" width="0.83" height="1.3" fill="#f92672"/><rect x="20.65" y="290.15" width="16.52" height="1.3" fill="#f8f8f2"/><rect x="38.00" y="290.15" width="12.39" height="1.3" fill="#e6db74"/><rect x="9.91" y="291.90" width="4.96" height="1.3" fill="#66d9ef"/><rect x="15.69" y="291.90" width="10.74" height="1.3" fill="#f8f8f2"/><rect x="27.26" y="291.90" width="24.78" height="1.3" fill="#e6db74"/><rect x="52.86" y="291.90" width="0.83" height="1.3" fill="#f92672"/><rect x="54.52" y="291.90" width="16.52" height="1.3" fill="#f8f8f2"/><rect x="9.91" y="293.66" width="4.96" height="1.3" fill="#66d9ef"/><rect x="15.69" y="293.66" width="10.74" height="1.3" fill="#f8f8f2"/><rect x="27.26" y="293.66" width="18.17" height="1.3" fill="#e6db74"/><rect x="46.26" y="293.66" width="0.83" height="1.3" fill="#f92672"/><rect x="47.91" y="293.66" width="16.52" height="1.3" fill="#f8f8f2"/><rect x="9.91" y="295.42" width="2.48" height="1.3" fill="#f92672"/><rect x="9.91" y="297.18" width="2.48" height="1.3" fill="#f92672"/><rect x="6.61" y="298.93" width="0.83" height="1.3" fill="#f8f8f2"/><rect x="6.61" y="302.45" width="4.96" height="1.3" fill="#66d9ef"/><rect x="12.39" y="302.45" width="10.74" height="1.3" fill="#f8f8f2"/><rect x="23.95" y="302.45" width="24.78" height="1.3" fill="#e6db74"/><rect x="49.56" y="302.45" width="0.83" height="1.3" fill="#f92672"/><rect x="51.21" y="302.45" width="11.56" height="1.3" fill="#f8f8f2"/><rect x="6.61" y="305.96" width="39.65" height="1.3" fill="#75715e"/><rect x="6.61" y="307.72" width="2.48" height="1.3" fill="#f92672"/><rect x="9.91" y="307.72" width="2.48" height="1.3" fill="#66d9ef"/><rect x="13.22" y="307.72" width="1.65" height="1.3" fill="#f8f8f2"/><rect x="15.69" y="307.72" width="0.83" height="1.3" fill="#f92672"/><rect x="17.35" y="307.72" width="2.48" height="1.3" fill="#f8f8f2"/><rect x="20.65" y="307.72" width="0.83" height="1.3" fill="#f92672"/><rect x="22.30" y="307.72" width="9.91" height="1.3" fill="#f8f8f2"/><rect x="33.04" y="307.72" width="1.65" height="1.3" fill="#f92672"/><rect x="35.52" y="307.72" width="2.48" height="1.3" fill="#f8f8f2"/><rect x="6.61" y="309.47" width="0.83" height="1.3" fill="#f8f8f2"/><rect x="9.91" y="311.23" width="4.96" height="1.3" fill="#66d9ef"/><rect x="15.69" y="311.23" width="10.74" height="1.3" fill="#f8f8f2"/><rect x="27.26" y="311.23" width="24.78" height="1.3" fill="#e6db74"/><rect x="52.86" y="311.23" width="0.83" height="1.3" fill="#f92672"/><rect x="54.52" y="311.23" width="18.17" height="1.3" fill="#f8f8f2"/><rect x="9.91" y="312.99" width="4.96" height="1.3" fill="#66d9ef"/><rect x="15.69" y="312.99" width="10.74" height="1.3" fill="#f8f8f2"/><rect x="27.26" y="312.99" width="6.61" height="1.3" fill="#e6db74"/><rect x="34.69" y="312.99" width="0.83" height="1.3" fill="#f92672"/><rect x="36.34" y="312.99" width="1.65" height="1.3" fill="#ae81ff"/><rect x="9.91" y="314.75" width="5.78" height="1.3" fill="#f8f8f2"/><rect x="16.52" y="314.75" width="8.26" height="1.3" fill="#f8f8f2"/><rect x="25.61" y="314.75" width="0.83" height="1.3" fill="#f92672"/><rect x="27.26" y="314.75" width="16.52" height="1.3" fill="#f8f8f2"/><rect x="44.60" y="314.75" width="12.39" height="1.3" fill="#e6db74"/><rect x="9.91" y="316.50" width="4.96" height="1.3" fill="#66d9ef"/><rect x="15.69" y="316.50" width="10.74" height="1.3" fill="#f8f8f2"/><rect x="27.26" y="316.50" width="4.13" height="1.3" fill="#e6db74"/><rect x="9.91" y="318.26" width="4.96" height="1.3" fill="#66d9ef"/><rect x="15.69" y="318.26" width="10.74" height="1.3" fill="#f8f8f2"/><rect x="27.26" y="318.26" width="33.04" height="1.3" fill="#e6db74"/><rect x="61.12" y="318.26" width="0.83" height="1.3" fill="#f92672"/><rect x="62.78" y="318.26" width="12.22" height="1.3" fill="#f8f8f2"/><rect x="9.91" y="320.02" width="4.96" height="1.3" fill="#66d9ef"/><rect x="15.69" y="320.02" width="10.74" height="1.3" fill="#f8f8f2"/><rect x="27.26" y="320.02" width="1.65" height="1.3" fill="#f8f8f2"/><rect x="6.61" y="321.77" width="0.83" height="1.3" fill="#f8f8f2"/><rect x="6.61" y="323.53" width="4.96" height="1.3" fill="#66d9ef"/><rect x="12.39" y="323.53" width="10.74" height="1.3" fill="#f8f8f2"/><rect x="23.95" y="323.53" width="1.65" height="1.3" fill="#f8f8f2"/><rect x="6.61" y="325.29" width="11.56" height="1.3" fill="#75715e"/><rect x="6.61" y="327.04" width="4.96" height="1.3" fill="#66d9ef"/><rect x="12.39" y="327.04" width="10.74" height="1.3" fill="#f8f8f2"/><rect x="23.95" y="327.04" width="27.26" height="1.3" fill="#e6db74"/><rect x="52.04" y="327.04" width="0.83" height="1.3" fill="#f92672"/><rect x="53.69" y="327.04" width="16.52" height="1.3" fill="#f8f8f2"/><rect x="6.61" y="330.56" width="1.65" height="1.3" fill="#f92672"/><rect x="9.09" y="330.56" width="16.52" height="1.3" fill="#f8f8f2"/><rect x="26.43" y="330.56" width="1.65" height="1.3" fill="#f92672"/><rect x="6.61" y="332.32" width="0.83" height="1.3" fill="#f8f8f2"/><rect x="9.91" y="334.07" width="8.26" height="1.3" fill="#f8f8f2"/><rect x="19.00" y="334.07" width="0.83" height="1.3" fill="#f92672"/><rect x="20.65" y="334.07" width="9.91" height="1.3" fill="#f8f8f2"/><rect x="31.39" y="334.07" width="2.48" height="1.3" fill="#f92672"/><rect x="34.69" y="334.07" width="5.78" height="1.3" fill="#66d9ef"/><rect x="41.30" y="334.07" width="16.52" height="1.3" fill="#f8f8f2"/><rect x="9.91" y="335.83" width="4.96" height="1.3" fill="#66d9ef"/><rect x="15.69" y="335.83" width="10.74" height="1.3" fill="#f8f8f2"/><rect x="27.26" y="335.83" width="28.91" height="1.3" fill="#e6db74"/><rect x="56.99" y="335.83" width="0.83" height="1.3" fill="#f92672"/><rect x="58.65" y="335.83" width="16.35" height="1.3" fill="#f8f8f2"/><rect x="9.91" y="337.59" width="14.87" height="1.3" fill="#75715e"/><rect x="9.91" y="339.34" width="20.65" height="1.3" fill="#75715e"/><rect x="6.61" y="341.10" width="0.83" height="1.3" fill="#f8f8f2"/><rect x="6.61" y="346.37" width="4.96" height="1.3" fill="#66d9ef"/><rect x="12.39" y="346.37" width="10.74" height="1.3" fill="#f8f8f2"/><rect x="23.95" y="346.37" width="0.83" height="1.3" fill="#f8f8f2"/><rect x="6.61" y="348.13" width="4.96" height="1.3" fill="#66d9ef"/><rect x="12.39" y="348.13" width="10.74" height="1.3" fill="#f8f8f2"/><rect x="23.95" y="348.13" width="0.83" height="1.3" fill="#f8f8f2"/><rect x="6.61" y="349.89" width="20.65" height="1.3" fill="#75715e"/><rect x="6.61" y="353.40" width="20.65" height="1.3" fill="#75715e"/><rect x="6.61" y="355.16" width="45.43" height="1.3" fill="#75715e"/><rect x="6.61" y="356.91" width="4.96" height="1.3" fill="#66d9ef"/><rect x="12.39" y="356.91" width="10.74" height="1.3" fill="#f8f8f2"/><rect x="23.95" y="356.91" width="14.87" height="1.3" fill="#e6db74"/><rect x="39.65" y="356.91" width="0.83" height="1.3" fill="#f92672"/><rect x="41.30" y="356.91" width="8.26" height="1.3" fill="#f8f8f2"/><rect x="50.39" y="356.91" width="0.83" height="1.3" fill="#f92672"/><rect x="52.04" y="356.91" width="6.61" height="1.3" fill="#e6db74"/><rect x="59.47" y="356.91" width="1.65" height="1.3" fill="#f92672"/><rect x="61.95" y="356.91" width="13.05" height="1.3" fill="#e6db74"/><rect x="6.61" y="358.67" width="4.96" height="1.3" fill="#66d9ef"/><rect x="12.39" y="358.67" width="10.74" height="1.3" fill="#f8f8f2"/><rect x="23.95" y="358.67" width="4.96" height="1.3" fill="#e6db74"/><rect x="29.74" y="358.67" width="0.83" height="1.3" fill="#f8f8f2"/><rect x="6.61" y="360.43" width="4.96" height="1.3" fill="#66d9ef"/><rect x="12.39" y="360.43" width="10.74" height="1.3" fill="#f8f8f2"/><rect x="23.95" y="360.43" width="14.87" height="1.3" fill="#e6db74"/><rect x="39.65" y="360.43" width="0.83" height="1.3" fill="#f92672"/><rect x="41.30" y="360.43" width="8.26" height="1.3" fill="#f8f8f2"/><rect x="50.39" y="360.43" width="0.83" height="1.3" fill="#f92672"/><rect x="52.04" y="360.43" width="8.26" height="1.3" fill="#e6db74"/><rect x="61.12" y="360.43" width="0.83" height="1.3" fill="#f92672"/><rect x="62.78" y="360.43" width="8.26" height="1.3" fill="#f8f8f2"/><rect x="71.86" y="360.43" width="0.83" height="1.3" fill="#f92672"/><rect x="6.61" y="362.19" width="4.96" height="1.3" fill="#f92672"/><rect x="12.39" y="362.19" width="11.56" height="1.3" fill="#f8f8f2"/><rect x="24.78" y="362.19" width="0.83" height="1.3" fill="#f92672"/><rect x="26.43" y="362.19" width="8.26" height="1.3" fill="#f8f8f2"/><rect x="35.52" y="362.19" width="0.83" height="1.3" fill="#f92672"/><rect x="37.17" y="362.19" width="13.22" height="1.3" fill="#f8f8f2"/><rect x="51.21" y="362.19" width="1.65" height="1.3" fill="#f92672"/><rect x="53.69" y="362.19" width="0.83" height="1.3" fill="#ae81ff"/><rect x="55.34" y="362.19" width="0.83" height="1.3" fill="#f92672"/><rect x="56.99" y="362.19" width="8.26" height="1.3" fill="#f8f8f2"/><rect x="6.61" y="363.94" width="0.83" height="1.3" fill="#f8f8f2"/><rect x="9.91" y="365.70" width="4.96" height="1.3" fill="#66d9ef"/><rect x="15.69" y="365.70" width="10.74" height="1.3" fill="#f8f8f2"/><rect x="27.26" y="365.70" width="27.26" height="1.3" fill="#e6db74"/><rect x="55.34" y="365.70" width="1.65" height="1.3" fill="#f8f8f2"/><rect x="9.91" y="367.46" width="11.56" height="1.3" fill="#f8f8f2"/><rect x="22.30" y="367.46" width="0.83" height="1.3" fill="#f92672"/><rect x="23.95" y="367.46" width="12.39" height="1.3" fill="#f8f8f2"/><rect x="9.91" y="369.21" width="20.65" height="1.3" fill="#75715e"/><rect x="9.91" y="372.73" width="9.91" height="1.3" fill="#f8f8f2"/><rect x="20.65" y="372.73" width="0.83" height="1.3" fill="#f92672"/><rect x="22.30" y="372.73" width="9.91" height="1.3" fill="#f8f8f2"/><rect x="33.04" y="372.73" width="0.83" height="1.3" fill="#f92672"/><rect x="34.69" y="372.73" width="24.78" height="1.3" fill="#f8f8f2"/><rect x="9.91" y="374.48" width="4.96" height="1.3" fill="#66d9ef"/><rect x="15.69" y="374.48" width="10.74" height="1.3" fill="#f8f8f2"/><rect x="27.26" y="374.48" width="20.65" height="1.3" fill="#e6db74"/><rect x="48.73" y="374.48" width="0.83" height="1.3" fill="#f92672"/><rect x="50.39" y="374.48" width="12.39" height="1.3" fill="#f8f8f2"/><rect x="9.91" y="376.24" width="4.96" height="1.3" fill="#66d9ef"/><rect x="15.69" y="376.24" width="10.74" height="1.3" fill="#f8f8f2"/><rect x="27.26" y="376.24" width="20.65" height="1.3" fill="#e6db74"/><rect x="48.73" y="376.24" width="0.83" height="1.3" fill="#f92672"/><rect x="50.39" y="376.24" width="12.39" height="1.3" fill="#f8f8f2"/><rect x="9.91" y="378.00" width="2.48" height="1.3" fill="#f92672"/><rect x="9.91" y="379.75" width="2.48" height="1.3" fill="#f92672"/><rect x="6.61" y="381.51" width="0.83" height="1.3" fill="#f8f8f2"/><rect x="6.61" y="383.27" width="4.96" height="1.3" fill="#66d9ef"/><rect x="12.39" y="383.27" width="10.74" height="1.3" fill="#f8f8f2"/><rect x="23.95" y="383.27" width="24.78" height="1.3" fill="#e6db74"/><rect x="49.56" y="383.27" width="1.65" height="1.3" fill="#f8f8f2"/><rect x="6.61" y="385.03" width="37.17" height="1.3" fill="#75715e"/><rect x="6.61" y="386.78" width="4.96" height="1.3" fill="#66d9ef"/><rect x="12.39" y="386.78" width="10.74" height="1.3" fill="#f8f8f2"/><rect x="23.95" y="386.78" width="20.65" height="1.3" fill="#e6db74"/><rect x="45.43" y="386.78" width="0.83" height="1.3" fill="#f92672"/><rect x="47.08" y="386.78" width="11.56" height="1.3" fill="#f8f8f2"/><rect x="6.61" y="390.30" width="39.65" height="1.3" fill="#75715e"/><rect x="6.61" y="392.05" width="2.48" height="1.3" fill="#f92672"/><rect x="9.91" y="392.05" width="2.48" height="1.3" fill="#66d9ef"/><rect x="13.22" y="392.05" width="1.65" height="1.3" fill="#f8f8f2"/><rect x="15.69" y="392.05" width="0.83" height="1.3" fill="#f92672"/><rect x="17.35" y="392.05" width="2.48" height="1.3" fill="#f8f8f2"/><rect x="20.65" y="392.05" width="0.83" height="1.3" fill="#f92672"/><rect x="22.30" y="392.05" width="9.91" height="1.3" fill="#f8f8f2"/><rect x="33.04" y="392.05" width="1.65" height="1.3" fill="#f92672"/><rect x="35.52" y="392.05" width="1.65" height="1.3" fill="#f8f8f2"/><rect x="6.61" y="393.81" width="0.83" height="1.3" fill="#f8f8f2"/><rect x="9.91" y="395.57" width="4.96" height="1.3" fill="#66d9ef"/><rect x="15.69" y="395.57" width="10.74" height="1.3" fill="#f8f8f2"/><rect x="27.26" y="395.57" width="24.78" height="1.3" fill="#e6db74"/><rect x="52.86" y="395.57" width="0.83" height="1.3" fill="#f92672"/><rect x="54.52" y="395.57" width="18.17" height="1.3" fill="#f8f8f2"/><rect x="9.91" y="397.32" width="4.96" height="1.3" fill="#66d9ef"/><rect x="15.69" y="397.32" width="10.74" height="1.3" fill="#f8f8f2"/><rect x="27.26" y="397.32" width="8.26" height="1.3" fill="#e6db74"/><rect x="36.34" y="397.32" width="0.83" height="1.3" fill="#f92672"/><rect x="38.00" y="397.32" width="2.48" height="1.3" fill="#f8f8f2"/><rect x="9.91" y="399.08" width="11.56" height="1.3" fill="#f8f8f2"/><rect x="22.30" y="399.08" width="0.83" height="1.3" fill="#f92672"/><rect x="23.95" y="399.08" width="12.39" height="1.3" fill="#f8f8f2"/><rect x="37.17" y="399.08" width="0.83" height="1.3" fill="#f92672"/><rect x="38.82" y="399.08" width="16.52" height="1.3" fill="#f8f8f2"/><rect x="9.91" y="400.84" width="4.96" height="1.3" fill="#66d9ef"/><rect x="15.69" y="400.84" width="10.74" height="1.3" fill="#f8f8f2"/><rect x="27.26" y="400.84" width="33.04" height="1.3" fill="#e6db74"/><rect x="9.91" y="402.60" width="4.96" height="1.3" fill="#66d9ef"/><rect x="15.69" y="402.60" width="10.74" height="1.3" fill="#f8f8f2"/><rect x="27.26" y="402.60" width="33.04" height="1.3" fill="#e6db74"/><rect x="61.12" y="402.60" width="0.83" height="1.3" fill="#f92672"/><rect x="62.78" y="402.60" width="12.22" height="1.3" fill="#f8f8f2"/><rect x="9.91" y="404.35" width="4.96" height="1.3" fill="#66d9ef"/><rect x="15.69" y="404.35" width="10.74" height="1.3" fill="#f8f8f2"/><rect x="27.26" y="404.35" width="1.65" height="1.3" fill="#f8f8f2"/><rect x="6.61" y="406.11" width="0.83" height="1.3" fill="#f8f8f2"/><rect x="6.61" y="409.62" width="10.74" height="1.3" fill="#75715e"/><rect x="6.61" y="411.38" width="4.96" height="1.3" fill="#66d9ef"/><rect x="11.56" y="411.38" width="0.83" height="1.3" fill="#f92672"/><rect x="12.39" y="411.38" width="2.48" height="1.3" fill="#f8f8f2"/><rect x="14.87" y="411.38" width="0.83" height="1.3" fill="#f92672"/><rect x="15.69" y="411.38" width="6.61" height="1.3" fill="#f8f8f2"/><rect x="22.30" y="411.38" width="1.65" height="1.3" fill="#e6db74"/><rect x="23.95" y="411.38" width="1.65" height="1.3" fill="#f8f8f2"/><rect x="6.61" y="413.14" width="4.96" height="1.3" fill="#66d9ef"/><rect x="11.56" y="413.14" width="0.83" height="1.3" fill="#f92672"/><rect x="12.39" y="413.14" width="2.48" height="1.3" fill="#f8f8f2"/><rect x="14.87" y="413.14" width="0.83" height="1.3" fill="#f92672"/><rect x="15.69" y="413.14" width="6.61" height="1.3" fill="#f8f8f2"/><rect x="22.30" y="413.14" width="4.96" height="1.3" fill="#e6db74"/><rect x="28.08" y="413.14" width="0.83" height="1.3" fill="#e6db74"/><rect x="29.74" y="413.14" width="15.69" height="1.3" fill="#e6db74"/><rect x="46.26" y="413.14" width="3.30" height="1.3" fill="#e6db74"/><rect x="50.39" y="413.14" width="0.83" height="1.3" fill="#e6db74"/><rect x="52.04" y="413.14" width="0.83" height="1.3" fill="#e6db74"/><rect x="53.69" y="413.14" width="0.83" height="1.3" fill="#f92672"/><rect x="54.52" y="413.14" width="9.91" height="1.3" fill="#f8f8f2"/><rect x="64.43" y="413.14" width="0.83" height="1.3" fill="#f92672"/><rect x="65.25" y="413.14" width="4.96" height="1.3" fill="#f8f8f2"/><rect x="70.21" y="413.14" width="1.65" height="1.3" fill="#f8f8f2"/><rect x="6.61" y="416.65" width="1.65" height="1.3" fill="#f92672"/><rect x="9.09" y="416.65" width="10.74" height="1.3" fill="#f8f8f2"/><rect x="19.82" y="416.65" width="0.83" height="1.3" fill="#f92672"/><rect x="20.65" y="416.65" width="4.96" height="1.3" fill="#f8f8f2"/><rect x="25.61" y="416.65" width="0.83" height="1.3" fill="#f92672"/><rect x="26.43" y="416.65" width="0.83" height="1.3" fill="#ae81ff"/><rect x="27.26" y="416.65" width="0.83" height="1.3" fill="#f8f8f2"/><rect x="6.61" y="418.41" width="0.83" height="1.3" fill="#f8f8f2"/><rect x="9.91" y="421.92" width="8.26" height="1.3" fill="#f8f8f2"/><rect x="19.00" y="421.92" width="0.83" height="1.3" fill="#f92672"/><rect x="20.65" y="421.92" width="9.91" height="1.3" fill="#f8f8f2"/><rect x="30.56" y="421.92" width="0.83" height="1.3" fill="#f92672"/><rect x="31.39" y="421.92" width="6.61" height="1.3" fill="#f8f8f2"/><rect x="38.00" y="421.92" width="2.48" height="1.3" fill="#f92672"/><rect x="41.30" y="421.92" width="5.78" height="1.3" fill="#66d9ef"/><rect x="47.08" y="421.92" width="10.74" height="1.3" fill="#f8f8f2"/><rect x="57.82" y="421.92" width="0.83" height="1.3" fill="#f92672"/><rect x="58.65" y="421.92" width="7.43" height="1.3" fill="#f8f8f2"/><rect x="9.91" y="423.68" width="4.96" height="1.3" fill="#66d9ef"/><rect x="14.87" y="423.68" width="0.83" height="1.3" fill="#f92672"/><rect x="15.69" y="423.68" width="2.48" height="1.3" fill="#f8f8f2"/><rect x="18.17" y="423.68" width="0.83" height="1.3" fill="#f92672"/><rect x="19.00" y="423.68" width="6.61" height="1.3" fill="#f8f8f2"/><rect x="25.61" y="423.68" width="4.96" height="1.3" fill="#e6db74"/><rect x="31.39" y="423.68" width="0.83" height="1.3" fill="#e6db74"/><rect x="33.04" y="423.68" width="15.69" height="1.3" fill="#e6db74"/><rect x="49.56" y="423.68" width="3.30" height="1.3" fill="#e6db74"/><rect x="53.69" y="423.68" width="0.83" height="1.3" fill="#e6db74"/><rect x="55.34" y="423.68" width="0.83" height="1.3" fill="#e6db74"/><rect x="56.99" y="423.68" width="0.83" height="1.3" fill="#f92672"/><rect x="57.82" y="423.68" width="8.26" height="1.3" fill="#f8f8f2"/><rect x="66.08" y="423.68" width="0.83" height="1.3" fill="#f92672"/><rect x="66.91" y="423.68" width="4.96" height="1.3" fill="#f8f8f2"/><rect x="71.86" y="423.68" width="1.65" height="1.3" fill="#f8f8f2"/><rect x="6.61" y="428.95" width="0.83" height="1.3" fill="#f8f8f2"/><rect x="6.61" y="432.46" width="4.96" height="1.3" fill="#66d9ef"/><rect x="11.56" y="432.46" width="0.83" height="1.3" fill="#f92672"/><rect x="12.39" y="432.46" width="2.48" height="1.3" fill="#f8f8f2"/><rect x="14.87" y="432.46" width="0.83" height="1.3" fill="#f92672"/><rect x="15.69" y="432.46" width="6.61" height="1.3" fill="#f8f8f2"/><rect x="22.30" y="432.46" width="3.30" height="1.3" fill="#e6db74"/><rect x="26.43" y="432.46" width="1.65" height="1.3" fill="#e6db74"/><rect x="28.91" y="432.46" width="9.91" height="1.3" fill="#e6db74"/><rect x="39.65" y="432.46" width="15.69" height="1.3" fill="#e6db74"/><rect x="55.34" y="432.46" width="1.65" height="1.3" fill="#f8f8f2"/><rect x="6.61" y="434.22" width="4.96" height="1.3" fill="#66d9ef"/><rect x="11.56" y="434.22" width="0.83" height="1.3" fill="#f92672"/><rect x="12.39" y="434.22" width="2.48" height="1.3" fill="#f8f8f2"/><rect x="14.87" y="434.22" width="0.83" height="1.3" fill="#f92672"/><rect x="15.69" y="434.22" width="6.61" height="1.3" fill="#f8f8f2"/><rect x="22.30" y="434.22" width="36.34" height="1.3" fill="#e6db74"/><rect x="58.65" y="434.22" width="1.65" height="1.3" fill="#f8f8f2"/><rect x="6.61" y="435.98" width="4.96" height="1.3" fill="#66d9ef"/><rect x="11.56" y="435.98" width="0.83" height="1.3" fill="#f92672"/><rect x="12.39" y="435.98" width="2.48" height="1.3" fill="#f8f8f2"/><rect x="14.87" y="435.98" width="0.83" height="1.3" fill="#f92672"/><rect x="15.69" y="435.98" width="6.61" height="1.3" fill="#f8f8f2"/><rect x="22.30" y="435.98" width="1.65" height="1.3" fill="#e6db74"/><rect x="23.95" y="435.98" width="1.65" height="1.3" fill="#f8f8f2"/><rect x="6.61" y="437.74" width="4.96" height="1.3" fill="#66d9ef"/><rect x="11.56" y="437.74" width="0.83" height="1.3" fill="#f92672"/><rect x="12.39" y="437.74" width="2.48" height="1.3" fill="#f8f8f2"/><rect x="14.87" y="437.74" width="0.83" height="1.3" fill="#f92672"/><rect x="15.69" y="437.74" width="6.61" height="1.3" fill="#f8f8f2"/><rect x="22.30" y="437.74" width="1.65" height="1.3" fill="#e6db74"/><rect x="23.95" y="437.74" width="1.65" height="1.3" fill="#f8f8f2"/><rect x="3.30" y="443.01" width="0.83" height="1.3" fill="#f8f8f2"/><rect x="3.30" y="448.28" width="4.96" height="1.3" fill="#f92672"/><rect x="9.09" y="448.28" width="5.78" height="1.3" fill="#66d9ef"/><rect x="15.69" y="448.28" width="1.65" height="1.3" fill="#f8f8f2"/><rect x="18.17" y="448.28" width="11.56" height="1.3" fill="#a6e22e"/><rect x="29.74" y="448.28" width="1.65" height="1.3" fill="#f8f8f2"/><rect x="3.30" y="450.03" width="0.83" height="1.3" fill="#f8f8f2"/><rect x="6.61" y="451.79" width="4.96" height="1.3" fill="#f92672"/><rect x="12.39" y="451.79" width="8.26" height="1.3" fill="#f8f8f2"/><rect x="3.30" y="453.55" width="0.83" height="1.3" fill="#f8f8f2"/><rect x="3.30" y="457.06" width="4.96" height="1.3" fill="#f92672"/><rect x="9.09" y="457.06" width="5.78" height="1.3" fill="#66d9ef"/><rect x="15.69" y="457.06" width="1.65" height="1.3" fill="#f8f8f2"/><rect x="18.17" y="457.06" width="12.39" height="1.3" fill="#a6e22e"/><rect x="30.56" y="457.06" width="1.65" height="1.3" fill="#f8f8f2"/><rect x="3.30" y="458.82" width="0.83" height="1.3" fill="#f8f8f2"/><rect x="6.61" y="460.58" width="4.96" height="1.3" fill="#f92672"/><rect x="12.39" y="460.58" width="9.09" height="1.3" fill="#f8f8f2"/><rect x="3.30" y="462.33" width="0.83" height="1.3" fill="#f8f8f2"/><rect x="0.00" y="467.61" width="0.83" height="1.3" fill="#f8f8f2"/></svg>
<div class="abs" style="left:810px;top:64px;width:1px;height:578px;background:#23241f"></div>
<div class="abs" style="left:886px;top:64px;width:14px;height:579px;background:linear-gradient(90deg,#1e1e1d 0,#222221 1.5px,#282827 45%,#343433 100%)"></div>
<div class="abs" style="left:888.5px;top:506.5px;width:8.5px;height:69px;border-radius:4.5px;background:linear-gradient(90deg,#474747,#515151 50%,#474747);border:1px solid #1b1b1b;box-shadow:inset 0 0 0 0.5px #5a5a5a"></div>
<div class="abs" style="left:0;top:640.5px;width:131px;height:1.5px;background:#f2f2f2"></div>
<div class="abs" style="left:0;top:642.5px;width:900px;height:2px;background:#050505"></div>
<div class="abs" style="left:0;top:644.5px;width:900px;height:30.5px;background:linear-gradient(#dadada 0,#d0d0d0 1.5px,#bdbdbd 3px,#b2b2b2 50%,#a9a9a9 100%)"></div>
<div class="abs" style="left:131px;top:646px;width:1px;height:29px;background:rgba(255,255,255,0.25)"></div>
<div class="abs" style="left:0;top:659px;width:900px;height:1px;background:rgba(255,255,255,0.12)"></div>
<!-- mint logo -->
<svg class="abs" style="left:0;top:646px" width="30" height="29" viewBox="0 0 30 29">
 <defs><linearGradient id="mg" x1="0" y1="0" x2="1" y2="1"><stop offset="0" stop-color="#b4d8fb"/><stop offset="0.45" stop-color="#5b9bec"/><stop offset="1" stop-color="#1d50c8"/></linearGradient></defs>
 <path d="M21.62,12.85 L24.81,13.30 L24.81,17.70 L21.62,18.15 L20.82,20.08 L22.76,22.65 L19.65,25.76 L17.08,23.82 L15.15,24.62 L14.70,27.81 L10.30,27.81 L9.85,24.62 L7.92,23.82 L5.35,25.76 L2.24,22.65 L4.18,20.08 L3.38,18.15 L0.19,17.70 L0.19,13.30 L3.38,12.85 L4.18,10.92 L2.24,8.35 L5.35,5.24 L7.92,7.18 L9.85,6.38 L10.30,3.19 L14.70,3.19 L15.15,6.38 L17.08,7.18 L19.65,5.24 L22.76,8.35 L20.82,10.92 Z" fill="#fafafa" stroke="#e6e6e6" stroke-width="0.6"/>
 <circle cx="12.5" cy="15.5" r="6" fill="#b8b8b8"/>
 <rect x="4.8" y="2.6" width="22" height="18.2" rx="4.5" fill="url(#mg)" stroke="#f4f8ff" stroke-width="0.9"/>
 <path d="M9.6,4.8 L9.6,14.2 Q9.6,17.2 12.6,17.2 L19.5,17.2 Q23.2,17.2 23.2,13.5 L23.2,10" fill="none" stroke="#fff" stroke-width="2"/>
 <path d="M13.2,14.5 L13.2,9.8 Q13.2,7.6 15.3,7.6 Q17.3,7.6 17.3,9.8 L17.3,13.2 M17.3,9.8 Q17.3,7.6 19.3,7.6 Q21.3,7.6 21.3,9.8 L21.3,14.5" fill="none" stroke="#fff" stroke-width="1.7"/>
</svg>
<div class="abs" style="left:28px;top:662px;font-size:9px;color:#c8d8ee">2</div>
<!-- desktop thumbnail -->
<div class="abs" style="left:33px;top:651.5px;width:25px;height:18.5px;background:linear-gradient(135deg,#4f8cc4 0,#3a74ae 45%,#163d74 55%,#1e4f88 100%);border:1px solid #1a3a68"></div>
<div class="abs" style="left:34px;top:668px;width:23px;height:2px;background:#0a0a0a"></div>
<div class="abs" style="left:35px;top:654px;width:2px;height:2px;background:#dfe8f0;border-radius:1px"></div>
<div class="abs" style="left:35px;top:658px;width:2px;height:2px;background:#b8d080;border-radius:1px"></div>
<!-- dolphin big -->
<svg class="abs" style="left:66px;top:647.5px" width="23" height="27" viewBox="0 0 23 27">
 <defs><linearGradient id="dg" x1="0" y1="0" x2="1" y2="1"><stop offset="0" stop-color="#9fd0ff"/><stop offset="0.5" stop-color="#5aa4f6"/><stop offset="1" stop-color="#2a78e8"/></linearGradient></defs>
 <path d="M2,3 Q2,0.5 5,0.5 L18,0.5 Q21,0.5 21,3 L21,25.5 L2,25.5 Z" fill="#f8f8f8" stroke="#555" stroke-width="1"/>
 <rect x="3.5" y="5" width="16" height="7.5" fill="url(#dg)"/>
 <rect x="3.5" y="14.5" width="16" height="9.5" fill="url(#dg)"/>
 <rect x="8.5" y="5" width="6" height="1.6" fill="#f0f0f0"/>
 <rect x="8.5" y="14.5" width="6" height="1.6" fill="#f0f0f0"/>
</svg>
<div class="abs" style="left:95px;top:662px;font-size:9px;color:#c8d0dc">1</div>
<!-- task buttons -->
<div class="abs" style="left:97px;top:648px;width:197px;height:23px;border:1px solid rgba(255,255,255,0.18);border-radius:3px"></div>
<svg class="abs" style="left:101px;top:652.5px" width="14" height="15" viewBox="0 0 14 15">
 <path d="M1.5,2 Q1.5,0.5 3,0.5 L11,0.5 Q12.5,0.5 12.5,2 L12.5,14 L1.5,14 Z" fill="#f4f4f4" stroke="#666" stroke-width="0.8"/>
 <rect x="2.5" y="3" width="9" height="4" fill="#3d8af0"/><rect x="2.5" y="8.5" width="9" height="4.5" fill="#3d8af0"/>
</svg>
<div class="abs" style="left:117px;top:653.5px;font-size:11.2px;color:#707070;white-space:nowrap;transform:scaleX(0.955);transform-origin:0 0">pc-chambre – Dolphin</div>
<div class="abs" style="left:297px;top:649px;width:197px;height:22px;border:1px solid #8c8c8c;border-radius:3.5px;background:linear-gradient(#e6e6e6,#cdcdcd 50%,#bdbdbd)"></div>
<svg class="abs" style="left:301px;top:652px" width="15" height="15" viewBox="0 0 15 15">
 <defs><radialGradient id="ffo" cx="0.35" cy="0.3" r="0.8"><stop offset="0" stop-color="#ffd040"/><stop offset="0.5" stop-color="#f07a18"/><stop offset="1" stop-color="#c83a10"/></radialGradient></defs>
 <circle cx="8.2" cy="6.8" r="5.6" fill="#2f6fd0"/>
 <circle cx="9" cy="5.8" r="3" fill="#64a8f0"/>
 <path d="M3.2,2 C1.2,4 0.6,7 1.4,9.6 C2.6,13.2 6,14.8 9.2,14.2 C12.6,13.6 14.6,10.6 14.4,7.8 C13.2,10.6 10.8,12 8,11.6 C5,11.2 3.4,8.6 4,6.2 C4.4,4.6 5.8,3.6 6.4,3.2 C5.2,3 4.2,3.2 3.6,3.8 C3.6,3.2 3.4,2.6 3.2,2 Z" fill="url(#ffo)"/>
</svg>
<div class="abs" style="left:319px;top:653.5px;font-size:11.3px;color:#262626;white-space:nowrap">Firefox</div>
<svg class="abs" style="left:485px;top:651px" width="7" height="5" viewBox="0 0 7 5"><path d="M1,4 L3.5,1.3 L6,4" fill="none" stroke="#333" stroke-width="1.1"/></svg>
<div class="abs" style="left:485px;top:655.5px;font-size:11px;color:#2a2a2a;transform:scaleX(0.85);transform-origin:0 0">3</div>
<div class="abs" style="left:497.5px;top:649px;width:196px;height:22px;border:1px solid #888;border-radius:3.5px;background:linear-gradient(#c4c4c4,#b2b2b2 50%,#a6a6a6)"></div>
<svg class="abs" style="left:502.5px;top:652.5px" width="16" height="16" viewBox="0 0 16 16">
 <rect x="0.8" y="0.8" width="14.4" height="14" rx="1.5" fill="#d0cecb" stroke="#7a7875" stroke-width="0.8"/>
 <rect x="2.2" y="2" width="11.6" height="10.5" fill="#3b3b3b"/>
 <rect x="2.2" y="12.5" width="11.6" height="1.2" fill="#202020"/>
 <text x="8" y="11.3" text-anchor="middle" font-family="Liberation Sans" font-weight="bold" font-size="10.5" fill="#f0921c">S</text>
</svg>

<div class="abs" style="left:519px;top:653.5px;font-size:11.3px;color:#262626;white-space:nowrap">Sublime_text</div>
<svg class="abs" style="left:685px;top:651px" width="7" height="5" viewBox="0 0 7 5"><path d="M1,4 L3.5,1.3 L6,4" fill="none" stroke="#333" stroke-width="1.1"/></svg>
<div class="abs" style="left:685px;top:655.5px;font-size:11px;color:#2a2a2a;transform:scaleX(0.85);transform-origin:0 0">2</div>
<!-- tray -->
<svg class="abs" style="left:701px;top:652px" width="16" height="17" viewBox="0 0 16 17">
 <path d="M8,0.5 L15,3 L15,8 Q15,13.5 8,16.5 Q1,13.5 1,8 L1,3 Z" fill="#e8e8e8" stroke="#9a9a9a" stroke-width="0.8"/>
 <circle cx="8" cy="8.3" r="4.8" fill="#2f6cc8"/>
 <rect x="7.2" y="7" width="1.6" height="4" fill="#fff"/><rect x="7.2" y="5" width="1.6" height="1.4" fill="#fff"/>
</svg>
<svg class="abs" style="left:725px;top:652px" width="17" height="19" viewBox="0 0 17 19">
 <g stroke="#555" stroke-width="3" fill="none" stroke-linecap="round">
  <path d="M3.2,1.5 L10.5,11.5 M13.8,1.5 L6.5,11.5"/>
  <circle cx="4.6" cy="14.3" r="2.6"/><circle cx="12.4" cy="14.3" r="2.6"/>
 </g>
 <g stroke="#fbfbfb" stroke-width="1.6" fill="none" stroke-linecap="round">
  <path d="M3.2,1.5 L10.5,11.5 M13.8,1.5 L6.5,11.5"/>
  <circle cx="4.6" cy="14.3" r="2.6"/><circle cx="12.4" cy="14.3" r="2.6"/>
 </g>
</svg>
<svg class="abs" style="left:747px;top:650px" width="22" height="22" viewBox="0 0 22 22">
 <circle cx="11" cy="11" r="9.4" fill="none" stroke="#8a8a8a" stroke-width="2.6"/>
 <circle cx="11" cy="11" r="9.4" fill="none" stroke="#e8e8e8" stroke-width="1.5"/>
 <g stroke="#fafafa" stroke-width="1.5" fill="#fafafa">
  <path d="M3.5,11 L17.5,11" /><path d="M7.5,11 L10.5,6.8 L14,6.8 M9.5,11 L12,14.8 L14.5,14.8"/>
  <circle cx="3.8" cy="11" r="1.9" stroke="none"/><rect x="14" y="5.6" width="2.4" height="2.4" stroke="none"/><circle cx="15" cy="14.8" r="1.4" stroke="none"/>
  <path d="M17,9 L19.5,11 L17,13 Z" stroke="none"/>
 </g>
</svg>
<div class="abs" style="left:744px;top:660.5px;font-size:10.5px;color:rgba(200,218,240,0.75);white-space:nowrap">Tab Size: 4</div>
<svg class="abs" style="left:771px;top:650px" width="23" height="22" viewBox="0 0 23 22">
 <path d="M1.5,8 L5,8 L10.5,3.5 L10.5,18.5 L5,14 L1.5,14 Z" fill="#ededed" stroke="#6a6a6a" stroke-width="0.8"/>
 <g fill="none" stroke="#5a5a5a" stroke-width="2.8"><path d="M13,7.5 Q14.8,11 13,14.5"/><path d="M15.8,5.2 Q18.6,11 15.8,16.8"/></g>
 <g fill="none" stroke="#f6f6f6" stroke-width="1.6"><path d="M13,7.5 Q14.8,11 13,14.5"/><path d="M15.8,5.2 Q18.6,11 15.8,16.8"/></g>
 <path d="M18.8,2.5 Q22.6,11 18.8,19.5" fill="none" stroke="#bdbdbd" stroke-width="1.3"/>
</svg>
<svg class="abs" style="left:798px;top:652px" width="18" height="18" viewBox="0 0 18 18">
 <rect x="1" y="1" width="16" height="16" rx="2.2" fill="#f8f8f8" stroke="#2a2a2a" stroke-width="1.6"/>
 <path d="M4.2,6.5 Q4.2,3.6 9,3.6 Q13.8,3.6 13.8,6.5 L13.8,12.2 L11.6,12.2 L11.6,14.4 L6.4,14.4 L6.4,12.2 L4.2,12.2 Z" fill="#161616"/>
 <g fill="#dcdcdc"><rect x="6.6" y="8" width="0.9" height="3"/><rect x="8.1" y="8" width="0.9" height="3"/><rect x="9.6" y="8" width="0.9" height="3"/><rect x="11.1" y="8" width="0.9" height="3"/></g>
 <rect x="7.8" y="13.6" width="2.4" height="4.4" fill="#f4f4f4" stroke="#777" stroke-width="0.4"/>
</svg>
<svg class="abs" style="left:827.5px;top:656.5px" width="12" height="8" viewBox="0 0 12 8"><path d="M0.8,7.2 L6,1 L11.2,7.2 Z" fill="#f6f6f6" stroke="#999" stroke-width="0.5"/></svg>
<div class="abs" style="left:844px;top:660.5px;font-size:11px;color:rgba(205,220,240,0.7)">Java</div>
<div class="abs" style="left:844px;top:648px;font-size:23.5px;color:#fbfbfb;white-space:nowrap;transform:scaleX(0.99);transform-origin:0 0;text-shadow:0 0 1px rgba(60,60,60,0.5)">11:27</div>

</body></html>
